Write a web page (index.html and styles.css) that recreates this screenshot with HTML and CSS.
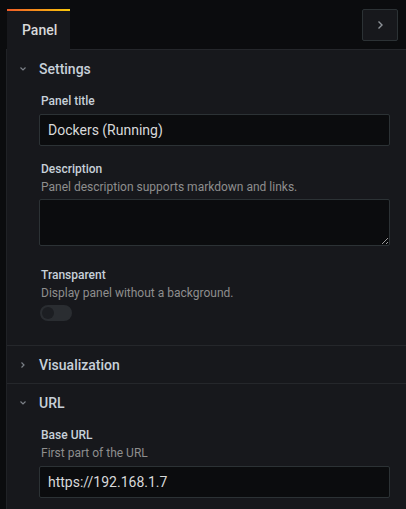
FILE: index.html
```html
<html lang="en">
<head>
    <meta charset="UTF-8">
    <meta name="viewport" content="width=device-width, initial-scale=1.0">
    <title> Panel options </title>
    <link rel="stylesheet" href="styles.css">
</head>
<body>

    <div class="tabbar">
        <div class="tab"> Panel </div>
        <button class="collapse_btn">
            <svg width="10" height="10" viewBox="0 0 10 10"><path d="M3.5 1.5 L7 5 L3.5 8.5" fill="none" stroke="#8e9399" stroke-width="1.4"/></svg>
        </button>
    </div>

    <div class="pane">
        <div class="section">
            <div class="section_head">
                <svg class="chev" width="10" height="10" viewBox="0 0 10 10"><path d="M2.5 3.5 L5 6 L7.5 3.5" fill="none" stroke="#7b8087" stroke-width="1.2"/></svg>
                <span> Settings </span>
            </div>
            <div class="section_body">
                <div class="field">
                    <div class="label"> Panel title </div>
                    <input type="text" class="input" value="Dockers (Running)">
                </div>
                <div class="field">
                    <div class="label"> Description </div>
                    <div class="desc"> Panel description supports markdown and links. </div>
                    <textarea class="input area"></textarea>
                </div>
                <div class="field">
                    <div class="label"> Transparent </div>
                    <div class="desc"> Display panel without a background. </div>
                    <div class="toggle"><span class="knob"></span></div>
                </div>
            </div>
        </div>

        <div class="section">
            <div class="section_head">
                <svg class="chev" width="10" height="10" viewBox="0 0 10 10"><path d="M3.5 2.5 L6 5 L3.5 7.5" fill="none" stroke="#7b8087" stroke-width="1.2"/></svg>
                <span> Visualization </span>
            </div>
        </div>

        <div class="section">
            <div class="section_head">
                <svg class="chev" width="10" height="10" viewBox="0 0 10 10"><path d="M2.5 3.5 L5 6 L7.5 3.5" fill="none" stroke="#7b8087" stroke-width="1.2"/></svg>
                <span> URL </span>
            </div>
            <div class="section_body">
                <div class="field">
                    <div class="label"> Base URL </div>
                    <div class="desc"> First part of the URL </div>
                    <input type="text" class="input" value="https://192.168.1.7">
                </div>
            </div>
        </div>
    </div>

</body>
</html>
```

FILE: styles.css
```css
body {
    margin: 0; 
    background: #0b0c0e; 
    font-family: Roboto, "Liberation Sans", sans-serif; 
    color: #c7d0d9; 
    overflow: hidden; 
}
.tabbar {
    display: flex; 
    justify-content: space-between; 
    align-items: flex-start; 
    padding: 9px 8px 0 7px; 
    height: 40px; 
}
.tab {
    width: 63px; 
    box-sizing: border-box; 
    border-left: 1px solid #202226; 
    border-right: 1px solid #202226; 
    border-top: 2px solid transparent; 
    border-image: linear-gradient(90deg, #f05a28, #fbca0a) 1; 
    border-image-width: 2px 0 0 0; 
    background: #17181c; 
    color: #d8d9da; 
    font-size: 14px; 
    font-weight: 500; 
    line-height: 38px; 
    padding-left: 14px; 
    position: relative; 
    z-index: 1; 
    margin-bottom: -1px; 
    height: 41px; 
}
.collapse_btn {
    width: 36px; 
    height: 32px; 
    background: #17181c; 
    border: 1px solid #2c3235; 
    border-radius: 2px; 
    display: flex; 
    align-items: center; 
    justify-content: center; 
    padding: 0; 
}
.pane {
    margin-left: 6px; 
    background: #17181c; 
    border-top: 1px solid #25272b; 
    border-left: 1px solid #202226; 
    height: 470px; 
}
.section {
    border-bottom: 1px solid #25272b; 
}
.section_head {
    display: flex; 
    align-items: center; 
    height: 37px; 
    padding-left: 11px; 
    font-size: 14px; 
    font-weight: 500; 
    color: #c7d0d9; 
}
.chev {
    margin-right: 11px; 
}
.section_body {
    padding: 5px 16px 24px 32px; 
}
.field {
    margin-bottom: 14px; 
}
.field:last-child {
    margin-bottom: 0; 
}
.label {
    font-size: 12px; 
    font-weight: 500; 
    line-height: 18px; 
    color: #c7d0d9; 
    padding-left: 2px; 
}
.desc {
    font-size: 12px; 
    line-height: 18px; 
    color: #8e8e8e; 
    padding-left: 2px; 
}
.input {
    display: block; 
    box-sizing: border-box; 
    width: 351px; 
    height: 32px; 
    margin-top: 4px; 
    background: #0b0c0e; 
    border: 1px solid #2c3235; 
    border-radius: 2px; 
    color: #d8d9da; 
    font-family: Roboto, "Liberation Sans", sans-serif; 
    font-size: 14px; 
    padding: 0 8px; 
    outline: none; 
    color-scheme: dark; 
}
.area {
    height: 47px; 
    margin-top: 3px; 
    resize: vertical; 
}
.field:has(.area) {
    margin-bottom: 20px; 
}
.toggle {
    margin-top: 3px; 
    margin-left: 1px; 
    width: 32px; 
    height: 16px; 
    border-radius: 8px; 
    background: #2a2d31; 
    position: relative; 
}
.knob {
    position: absolute; 
    left: 2px; 
    top: 2px; 
    width: 12px; 
    height: 12px; 
    border-radius: 50%; 
    background: #1c1e22; 
}
```
